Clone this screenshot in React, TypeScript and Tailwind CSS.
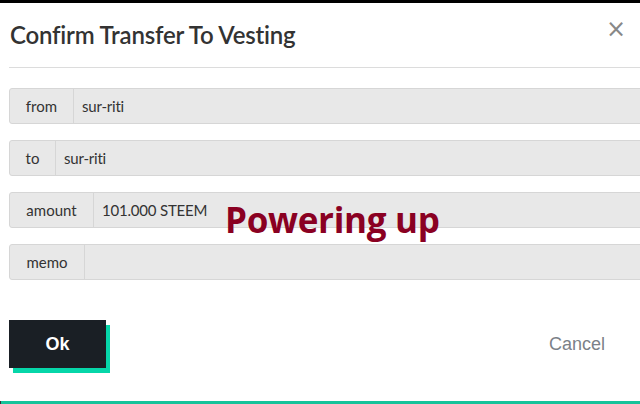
export default function App() {
  const rows = [
    { label: "from", value: "sur-riti", w: "w-[64px]" },
    { label: "to", value: "sur-riti", w: "w-[46px]" },
    { label: "amount", value: "101.000 STEEM", w: "w-[84px]" },
    { label: "memo", value: "", w: "w-[75px]" },
  ];

  return (
    <div className="relative w-[640px] h-[404px] overflow-hidden bg-white font-['Lato',sans-serif]">
      <div className="h-[3px] bg-black" />

      <div className="flex items-start justify-between pl-[10px] pr-[14px] pt-[16px] h-[64px]">
        <h1 className="text-[24px] leading-[32px] font-semibold text-[#333] tracking-[-0.2px]">Confirm Transfer To Vesting</h1>
        <span className="text-[24px] leading-[26px] text-[#888] font-['DejaVu_Sans',sans-serif] mt-[-3px]">×</span>
      </div>
      <div className="ml-[9px] h-px bg-[#dcdcdc]" />

      <div className="flex flex-col gap-[16px] pl-[9px] pt-[20px]">
        {rows.map((row) => (
          <div key={row.label} className="flex h-[36px] w-[660px] rounded-[3px] border border-[#d6d6d6] bg-[#e8e8e8] text-[15px] text-[#333]">
            <div className={`${row.w} flex items-center justify-center border-r border-[#d6d6d6] shrink-0`}>{row.label}</div>
            <div className="flex items-center pl-[8px] tracking-[-0.2px]">{row.value}</div>
          </div>
        ))}
      </div>

      <div className="absolute left-[225px] top-[196px] text-[35px] leading-[48px] font-bold text-[#8a0022] font-['Open_Sans',sans-serif] tracking-[-0.3px]">
        Powering up
      </div>

      <div className="flex items-center justify-between pl-[9px] pr-[35px] mt-[40px]">
        <div className="relative">
          <div className="absolute left-[4px] top-[5px] w-[97px] h-[48px] bg-[#06d6a9]" />
          <button className="relative w-[97px] h-[48px] bg-[#1a1f25] text-white text-[18px] font-bold font-['Liberation_Sans',sans-serif]">
            Ok
          </button>
        </div>
        <span className="text-[18px] text-[#7b8188] font-['Liberation_Sans',sans-serif]">Cancel</span>
      </div>

      <div className="absolute left-0 right-0 bottom-0 h-[3px] bg-[#15c39a] border-l border-[#333]" />
    </div>
  );
}
